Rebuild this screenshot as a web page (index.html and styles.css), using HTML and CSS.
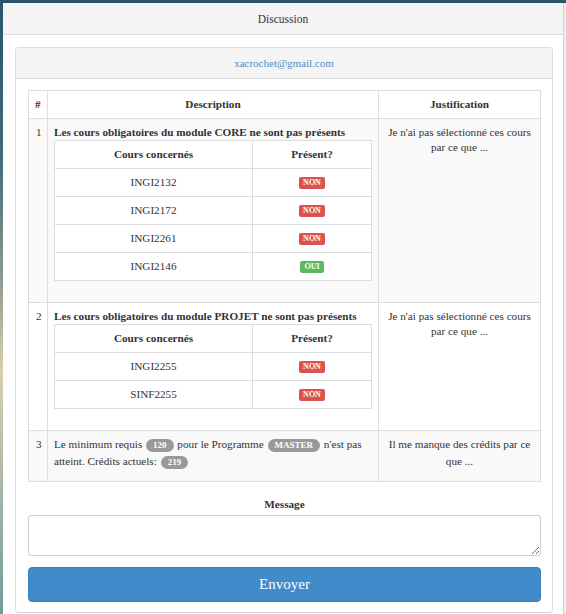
FILE: index.html
```html
<!DOCTYPE html>
<html lang="fr">
<head>
<meta charset="utf-8">
<title>Discussion</title>
<link rel="stylesheet" href="styles.css">
</head>
<body>
<div class="page">
  <div class="strip"></div>
  <div class="modal">
    <div class="modal-header">Discussion</div>
    <div class="modal-body">
      <div class="panel">
        <div class="panel-heading">xacrochet@gmail.com</div>
        <div class="panel-body">
          <table class="table main">
            <thead>
              <tr><th class="c-num">#</th><th class="c-desc">Description</th><th class="c-just">Justification</th></tr>
            </thead>
            <tbody>
              <tr class="odd">
                <td class="num">1</td>
                <td>
                  <div class="title">Les cours obligatoires du module CORE ne sont pas présents</div>
                  <table class="table inner">
                    <thead><tr><th class="ic1">Cours concernés</th><th>Présent?</th></tr></thead>
                    <tbody>
                      <tr><td>INGI2132</td><td><span class="label no">NON</span></td></tr>
                      <tr><td>INGI2172</td><td><span class="label no">NON</span></td></tr>
                      <tr><td>INGI2261</td><td><span class="label no">NON</span></td></tr>
                      <tr><td>INGI2146</td><td><span class="label yes">OUI</span></td></tr>
                    </tbody>
                  </table>
                </td>
                <td class="just">Je n'ai pas sélectionné ces cours par ce que ...</td>
              </tr>
              <tr>
                <td class="num">2</td>
                <td>
                  <div class="title">Les cours obligatoires du module PROJET ne sont pas présents</div>
                  <table class="table inner">
                    <thead><tr><th class="ic1">Cours concernés</th><th>Présent?</th></tr></thead>
                    <tbody>
                      <tr><td>INGI2255</td><td><span class="label no">NON</span></td></tr>
                      <tr><td>SINF2255</td><td><span class="label no">NON</span></td></tr>
                    </tbody>
                  </table>
                </td>
                <td class="just">Je n'ai pas sélectionné ces cours par ce que ...</td>
              </tr>
              <tr class="odd last">
                <td class="num">3</td>
                <td class="plain">Le minimum requis <span class="badge">120</span> pour le Programme <span class="badge">MASTER</span> n'est pas atteint. Crédits actuels: <span class="badge">219</span></td>
                <td class="just">Il me manque des crédits par ce que ...</td>
              </tr>
            </tbody>
          </table>
          <div class="form">
            <label class="msg-label" for="msg">Message</label>
            <textarea id="msg" class="msg"></textarea>
            <button class="btn" type="button">Envoyer</button>
          </div>
        </div>
      </div>
    </div>
  </div>
  <div class="side"></div>
</div>
</body>
</html>
```

FILE: styles.css
```css
html, body {
  margin: 0;
  padding: 0;
  height: 100%;
}
body {
  background: #27526a;
  font-family: "Liberation Serif", "Times New Roman", serif;
  font-size: 11.2px;
  line-height: 15px;
  color: #333;
  overflow: hidden;
}
.page {
  display: flex;
  margin-top: 3px;
  height: 611px;
}
.strip {
  width: 3px;
  flex: none;
  background: linear-gradient(to bottom, #2a566c 0%, #3f6b7a 25%, #8c9a8e 45%, #d8cfae 60%, #b4bcaa 75%, #6f9c9c 100%);
}
.side {
  width: 2px;
  flex: none;
  background: #eeeeee;
}
.modal {
  flex: 1;
  background: #fff;
  border-right: 1px solid #cfcfcf;
  border-top-left-radius: 3px;
}
.modal-header {
  height: 31px;
  line-height: 32px;
  text-align: center;
  background: #f4f4f4;
  border-bottom: 1px solid #dcdcdc;
  font-size: 11.5px;
  color: #333;
}
.modal-body {
  padding: 12px 10px 0 12px;
}
.panel {
  border: 1px solid #dcdcdc;
  border-bottom: 1px solid #d4d4d4;
  border-radius: 4px;
  background: #fff;
}
.panel-heading {
  height: 30px;
  line-height: 30px;
  text-align: center;
  background: #f4f4f4;
  border-bottom: 1px solid #dcdcdc;
  border-radius: 4px 4px 0 0;
  color: #4b8fcc;
  font-size: 11px;
}
.panel-body {
  padding: 11px 11px 10px 12px;
}
.table {
  width: 100%;
  border-collapse: collapse;
  border-spacing: 0;
}
.table th, .table td {
  border: 1px solid #dddddd;
  padding: 6px;
  vertical-align: top;
}
.main {
  table-layout: fixed;
}
.main th {
  font-weight: bold;
  text-align: center;
}
.main th.c-num {
  width: 6px;
  text-align: left;
}
.main th.c-just {
  width: 149px;
}
.main tr.odd > td {
  background: #f9f9f9;
}
.main td.num {
  text-align: left;
  padding-left: 7px;
}
.title {
  font-weight: bold;
}
.just {
  text-align: center;
}
.inner {
  margin-bottom: 15px;
  background: #fff;
}
.inner th, .inner td {
  text-align: center;
  vertical-align: middle;
  background: #fff;
}
.main tr.odd .inner td {
  background: #fff;
}
.inner th {
  font-weight: bold;
}
.inner th.ic1 {
  width: 185px;
}
.label {
  display: inline-block;
  font-size: 8px;
  font-weight: bold;
  line-height: 9px;
  padding: 1px 4px 2px;
  color: #fff;
  border-radius: 2px;
  vertical-align: middle;
}
.label.no { background: #d9534f; }
.label.yes { background: #5cb85c; }
.main tr.last td {
  padding-top: 5px;
  padding-bottom: 11px;
  line-height: 17px;
}
.badge {
  display: inline-block;
  background: #999;
  color: #fff;
  font-weight: bold;
  font-size: 9px;
  line-height: 11px;
  padding: 1px 7px 1px;
  border-radius: 7px;
  vertical-align: 0;
  margin: 0 1px;
}
.form {
  display: flex;
  flex-direction: column;
}
.msg-label {
  text-align: center;
  font-weight: bold;
  margin-top: 15px;
  margin-bottom: 3px;
}
.msg {
  height: 41px;
  box-sizing: border-box;
  border: 1px solid #cccccc;
  border-radius: 3px;
  margin: 0;
  padding: 4px 8px;
  font-family: inherit;
}
.btn {
  margin-top: 11px;
  height: 35px;
  background: #428bca;
  border: 1px solid #3a7fbf;
  border-radius: 4px;
  color: #fff;
  font-family: "Liberation Serif", "Times New Roman", serif;
  font-size: 15px;
  padding: 0;
}
```
